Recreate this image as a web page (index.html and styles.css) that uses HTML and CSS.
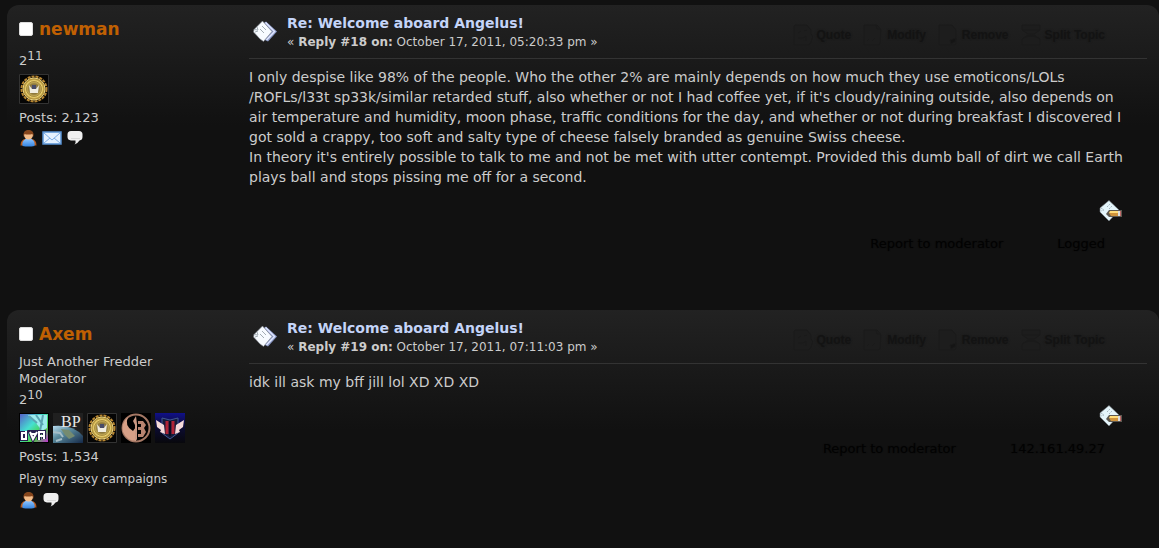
FILE: index.html
```
<!DOCTYPE html>
<html lang="en">
<head>
	<meta charset="UTF-8">
	<meta name="viewport" content="width=device-width, initial-scale=1.0">
	<title>Welcome aboard Angelus!</title>
	<link rel="stylesheet" href="styles.css">
</head>
<body>
	<!-- shared icons -->
	<svg class="sprites" aria-hidden="true">
		<defs>
			<radialGradient id="gold"><stop offset="0" stop-color="#8a8a98"/><stop offset=".45" stop-color="#8d7738"/><stop offset=".75" stop-color="#ecd470"/><stop offset="1" stop-color="#8a6418"/></radialGradient>
			<linearGradient id="shirt" x2="0" y2="1"><stop offset="0" stop-color="#8cc4ff"/><stop offset="1" stop-color="#3584e0"/></linearGradient>
			<linearGradient id="rainbow" x2="1" y2="1"><stop offset="0" stop-color="#5560c8"/><stop offset=".4" stop-color="#45e0d0"/><stop offset=".7" stop-color="#48d040"/><stop offset="1" stop-color="#c030d0"/></linearGradient>
			<linearGradient id="earth" x2="1" y2="1"><stop offset="0" stop-color="#b8dcf0"/><stop offset=".4" stop-color="#5a8a9c"/><stop offset="1" stop-color="#142848"/></linearGradient>
			<linearGradient id="night" x2="0" y2="1"><stop offset="0" stop-color="#10108a"/><stop offset=".4" stop-color="#0c0c38"/><stop offset="1" stop-color="#08080c"/></linearGradient>
		</defs>
		<symbol id="i-post" viewBox="0 0 24 24">
			<path d="M13 1.500L24 11.500 15 21.500 11 19.500 8 5z" fill="#8d9bc8"/>
			<path d="M12.500 2.500L21.500 11.500 13.500 20" fill="none" stroke="#dfe6ff" stroke-width="1.500"/>
			<path d="M9.500 1L19 11.500 10.500 21.500 7 19 .500 12 1 9.500z" fill="#f7fbff" stroke="#70757f" stroke-width=".6"/>
			<path d="M9 6l4 4M7 9l4 4M1 9.500l4 .500-1-3M2 12l3-1" fill="none" stroke="#a3adb4"/>
		</symbol>
		<symbol id="i-edit" viewBox="0 0 24 24">
			<path d="M10 1.500L20 11 10 22 1 13V9z" fill="#e4f5fb" stroke="#737b80" stroke-width=".6"/>
			<path d="M8 8l3-3M10 10l3-3M2 9l3 2-3 1" fill="none" stroke="#a5b5be" stroke-dasharray="2 1"/>
			<path d="M10 11h13v7H10l-3-3z" fill="#5d5850"/>
			<path d="M11 12h8v2h-9z" fill="#ffdc78"/><path d="M10 14h9v3h-7z" fill="#cf933b"/>
			<path d="M19 12h2v5h-2z" fill="#ddd"/><path d="M21 12h1v5h-1z" fill="#c26a6a"/>
		</symbol>
		<symbol id="i-user" viewBox="0 0 18 18">
			<path d="M1 16.500q0-6 5-6.500h6q5 .500 5 6.500z" fill="#b85a1c"/>
			<path d="M3 17q-1-5 3-7h6q4 2 3 7-6 1-12 0z" fill="url(#shirt)"/>
			<circle cx="9" cy="6" r="4.500" fill="#f3bc89"/>
			<path d="M4 8Q3 1 9 1t5 7l-1-3q-5 1-8 0z" fill="#85451c"/>
		</symbol>
		<symbol id="i-mail" viewBox="0 0 20 16">
			<path d="M1 2h18v12H1z" fill="#e5f1ff" stroke="#5791d4" stroke-width="1.500"/>
			<path d="M2 3l8 7 8-7M2 13l6-5M18 13l-6-5" fill="none" stroke="#7faee6"/>
		</symbol>
		<symbol id="i-talk" viewBox="0 0 16 16">
			<path d="M4 1h8q3.500 0 3.500 3.500V7q0 3-3 3.500-1 2-5 4 1.500-2 1-4H4Q.500 10 .500 7V4.500Q.500 1 4 1z" fill="#f0f0f0"/>
			<path d="M4 8.500h9" stroke="#d9d9d9"/>
		</symbol>
		<symbol id="b-gold" viewBox="0 0 30 30">
			<path d="M.500 .500h29v29H.500z" fill="#050505" stroke="#333"/>
			<circle cx="15" cy="15" r="12.500" fill="none" stroke="#b88732" stroke-width="2" stroke-dasharray="3 1"/>
			<circle cx="15" cy="15" r="11" fill="url(#gold)" stroke="#ead582"/>
			<circle cx="15" cy="15" r="7.500" fill="none" stroke="#a88c40"/>
			<path d="M10 11l1 8h8l1-8-3 4h-4z" fill="#f0eddf"/><path d="M13 11h4v4h-4z" fill="#484c68"/>
		</symbol>
		<symbol id="b-wave" viewBox="0 0 30 30">
			<path d="M0 0h30v30H0z" fill="#000"/><path d="M1 1h28v28H1z" fill="url(#rainbow)"/>
			<path d="M9 2h19v13l-5 3-6-8z" fill="#9ceced"/><path d="M10 3l8 7M17 2l7 10M24 2l-3 16" stroke="#5aa5b2" stroke-width="2"/>
			<path d="M7 18v8H3v-6h4M11 19h7l-4 7zM20 27v-8h5v7" fill="none" stroke="#282050" stroke-width="4"/>
			<path d="M7 18v8H3v-6h4M11 19l3 7 4-7M12 21h5M20 27v-8h5v7M20 23h5" fill="none" stroke="#fff" stroke-width="2"/>
		</symbol>
		<symbol id="b-rebel" viewBox="0 0 30 30">
			<path d="M0 0h30v30H0z" fill="#000"/>
			<circle cx="15" cy="15" r="13.500" fill="none" stroke="#a57865" stroke-width="2"/>
			<path d="M7 4Q0 10 2 19q4 9 13 9V14l-3 4Q3 13 7 4z" fill="#d7a087"/>
			<path d="M12 8l3-5 1 8v16l-2-1V12z" fill="#c99883"/>
			<path d="M17 8h5l3 4-2 3 2 4-3 5h-5v-3h3v-4h-3v-3h3v-3h-3z" fill="#b98470"/>
		</symbol>
		<symbol id="b-wings" viewBox="0 0 30 30">
			<path d="M0 0h30v30H0z" fill="url(#night)"/>
			<path d="M7 5l8 2 8-2v15l-8 6-8-6z" fill="#151a38" stroke="#405895"/>
			<path d="M1 7l8 5 1 9-5-2 1-2-4-3z" fill="#f5dada"/><path d="M29 7l-8 5-1 9 5-2-1-2 4-3z" fill="#f5dada"/>
			<path d="M12 8v13M18 8v13" stroke="#b02336" stroke-width="3"/><path d="M15 8v15" stroke="#080b22" stroke-width="2"/>
		</symbol>
		<symbol id="t-quote" viewBox="0 0 20 22"><path d="M2 1h12l4 5v4l2 3-3 7-2 1H1V2z"/><path d="M5 9l3-2M11 7l3-1M5 14h5l3-2v5"/></symbol>
		<symbol id="t-modify" viewBox="0 0 20 22"><path d="M1 1h13l4 5-1 14-2 1H1z"/><path d="M13 1l1 4h4M4 17l2-2M9 17l3-3"/></symbol>
		<symbol id="t-remove" viewBox="0 0 20 22"><path d="M1 1h13l4 5v14l-2 1H1z"/><path d="M18 14l-6 2 1 4 4-2z" fill="#151515"/></symbol>
		<symbol id="t-split" viewBox="0 0 20 22"><path d="M1 1h18v5l-6 4H7L1 6zM1 15l6-4h6l6 4v6H1z"/><path d="M1 6h18M1 15q9-6 18 0"/></symbol>
	</svg>

	<div class="post">
		<div class="poster">
			<h4><input type="checkbox" id="msg18"><label for="msg18">newman</label></h4>
			<ul>
				<li class="rank">2<sup>11</sup></li>
				<li class="badges"><svg><use href="#b-gold"/></svg></li>
				<li>Posts: 2,123</li>
				<li class="profile">
					<a href="#" aria-label="View Profile"><svg><use href="#i-user"/></svg></a>
					<a href="#" aria-label="Email"><svg class="mail"><use href="#i-mail"/></svg></a>
					<a href="#" aria-label="Personal Message"><svg class="talk"><use href="#i-talk"/></svg></a>
				</li>
			</ul>
		</div>
		<div class="postarea">
			<div class="keyinfo">
				<svg class="icon"><use href="#i-post"/></svg>
				<div class="subject">
					<h5><a href="#">Re: Welcome aboard Angelus!</a></h5>
					<div class="date">« <strong>Reply #18 on:</strong> October 17, 2011, 05:20:33 pm »</div>
				</div>
				<div class="buttons">
					<button><svg><use href="#t-quote"/></svg>Quote</button>
					<button><svg><use href="#t-modify"/></svg>Modify</button>
					<button><svg><use href="#t-remove"/></svg>Remove</button>
					<button><svg><use href="#t-split"/></svg>Split Topic</button>
				</div>
			</div>
			<div class="inner">I only despise like 98% of the people. Who the other 2% are mainly depends on how much they use emoticons/LOLs<wbr>/ROFLs/l33t sp33k/similar retarded stuff, also whether or not I had coffee yet, if it's cloudy/raining outside, also depends on air temperature and humidity, moon phase, traffic conditions for the day, and whether or not during breakfast I discovered I got sold a crappy, too soft and salty type of cheese falsely branded as genuine Swiss cheese.<br>In theory it's entirely possible to talk to me and not be met with utter contempt. Provided this dumb ball of dirt we call Earth plays ball and stops pissing me off for a second.</div>
			<a class="edit" href="#" aria-label="Modify message"><svg><use href="#i-edit"/></svg></a>
			<div class="reportlinks"><a href="#">Report to moderator</a><span>Logged</span></div>
		</div>
	</div>

	<div class="post">
		<div class="poster">
			<h4><input type="checkbox" id="msg19"><label for="msg19">Axem</label></h4>
			<ul>
				<li>Just Another Fredder</li>
				<li>Moderator</li>
				<li class="rank">2<sup>10</sup></li>
				<li class="badges">
					<svg><use href="#b-wave"/></svg>
					<svg viewBox="0 0 30 30">
						<path d="M0 0h30v30H0z" fill="#202020"/>
						<path d="M0 13q20-2 30 10v7H0z" fill="url(#earth)"/><path d="M8 16l8 1 6 6-6 3-4-4z" fill="#758b70"/>
						<path d="M0 19l7 1 3 4M3 28l6-2" fill="none" stroke="#a5bdc6" stroke-width="2"/>
						<text class="badge-text" x="8" y="14">BP</text>
					</svg>
					<svg><use href="#b-gold"/></svg>
					<svg><use href="#b-rebel"/></svg>
					<svg><use href="#b-wings"/></svg>
				</li>
				<li>Posts: 1,534</li>
				<li class="blurb">Play my sexy campaigns</li>
				<li class="profile">
					<a href="#" aria-label="View Profile"><svg><use href="#i-user"/></svg></a>
					<a href="#" aria-label="Personal Message"><svg class="talk"><use href="#i-talk"/></svg></a>
				</li>
			</ul>
		</div>
		<div class="postarea">
			<div class="keyinfo">
				<svg class="icon"><use href="#i-post"/></svg>
				<div class="subject">
					<h5><a href="#">Re: Welcome aboard Angelus!</a></h5>
					<div class="date">« <strong>Reply #19 on:</strong> October 17, 2011, 07:11:03 pm »</div>
				</div>
				<div class="buttons">
					<button><svg><use href="#t-quote"/></svg>Quote</button>
					<button><svg><use href="#t-modify"/></svg>Modify</button>
					<button><svg><use href="#t-remove"/></svg>Remove</button>
					<button><svg><use href="#t-split"/></svg>Split Topic</button>
				</div>
			</div>
			<div class="inner">idk ill ask my bff jill lol XD XD XD</div>
			<a class="edit" href="#" aria-label="Modify message"><svg><use href="#i-edit"/></svg></a>
			<div class="reportlinks"><a href="#">Report to moderator</a><span>142.161.49.27</span></div>
		</div>
	</div>
</body>
</html>
```
FILE: styles.css
```
body {
	margin: 0;
	padding: 5px 0 0 7px;
	background: #111;
	color: #ccc;
	font: 13px/17px Verdana, "DejaVu Sans", sans-serif;
}
a {
	color: inherit;
	text-decoration: none;
}
.sprites {
	position: absolute;
	width: 0;
	height: 0;
}
.post {
	display: flex;
	padding: 8px 12px 58px;
	border-radius: 12px;
	background: linear-gradient(#222, #111 120px);
}
.poster {
	flex: 0 0 230px;
}
.poster h4 {
	display: flex;
	align-items: center;
	gap: 6px;
	margin: 0 0 3px;
	height: 32px;
	color: #c06002;
	font-size: 17px;
}
.poster input {
	appearance: none;
	width: 14px;
	height: 14px;
	margin: 0;
	border: 1px solid #ddd;
	border-radius: 2px;
	background: #fff;
}
.poster ul {
	margin: 0;
	padding: 0;
	list-style: none;
}
.rank {
	padding-top: 4px;
}
.rank sup {
	font-size: 12px;
	line-height: 1px;
}
.badges {
	display: flex;
	gap: 4px;
	padding: 5px 0;
}
.badges svg {
	width: 30px;
	height: 30px;
}
.badge-text {
	fill: #e8e8e8;
	font: 16px "Liberation Serif", serif;
}
.blurb {
	margin-top: 6px;
	font-size: 12px;
}
.profile {
	display: flex;
	align-items: center;
	gap: 4px;
	margin-top: 3px;
}
.profile svg {
	display: block;
	width: 19px;
	height: 18px;
}
.profile .mail {
	width: 20px;
	height: 16px;
}
.profile .talk {
	width: 18px;
	height: 16px;
}
.postarea {
	flex: 1;
	min-width: 0;
}
.keyinfo {
	display: flex;
	height: 45px;
	border-bottom: 1px solid #333;
}
.icon {
	width: 24px;
	height: 24px;
	margin: 7px 10px 0 4px;
}
.subject h5 {
	margin: 0;
	color: #c4d4f8;
	font-size: 14px;
	line-height: 20px;
}
.date {
	font-size: 12px;
	line-height: 18px;
}
.buttons {
	display: flex;
	align-items: flex-start;
	gap: 12px;
	margin: 11px 42px 0 auto;
}
.buttons button {
	display: flex;
	align-items: center;
	gap: 4px;
	padding: 0;
	border: 0;
	background: none;
	color: #131313;
	font: bold 12px/22px "Liberation Sans", Arial, sans-serif;
	text-shadow: 0 0 2px #181818;
}
.buttons svg {
	width: 20px;
	height: 22px;
	fill: #1d1d1d;
	stroke: #1a1a1a;
}
.inner {
	padding: 8px 12px 0 0;
	font-size: 14px;
	line-height: 20px;
}
.edit {
	display: block;
	width: 24px;
	margin: 12px 24px 0 auto;
}
.edit svg {
	display: block;
	width: 24px;
	height: 24px;
}
.reportlinks {
	display: flex;
	justify-content: flex-end;
	gap: 54px;
	margin: 12px 42px 0 0;
	color: #020202;
	text-shadow: 0 0 1px #0a0a0a;
}
```
